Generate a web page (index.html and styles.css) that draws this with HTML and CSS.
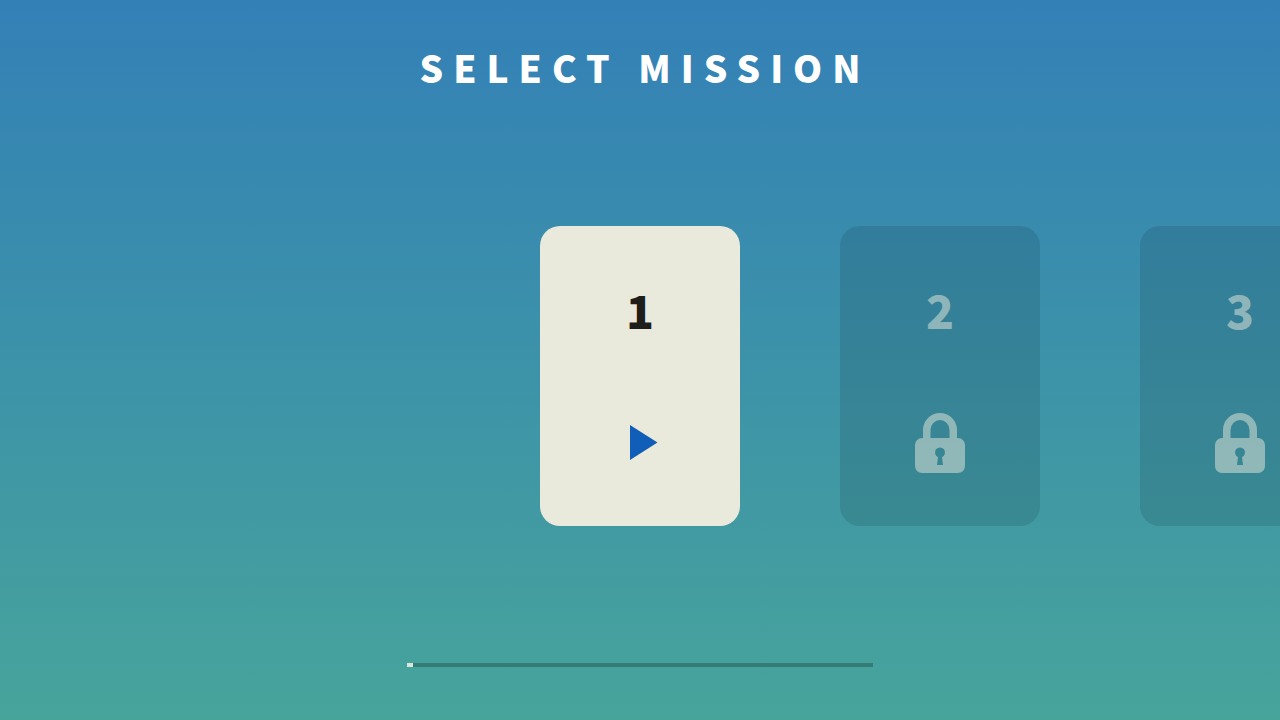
FILE: index.html
```html
<!DOCTYPE html>
<html lang="en">
<head>
    <meta charset="UTF-8">
    <meta name="viewport" content="width=device-width, initial-scale=1.0">
    <title>Select Mission</title>
    <link rel="stylesheet" href="styles.css">
</head>
<body>
    <header class="header">
        <h1 class="title">SELECT MISSION</h1>
    </header>

    <main class="missions">
        <button class="mission" type="button" aria-label="Play mission 1">
            <span class="number">1</span>
            <svg class="icon" viewBox="0 0 50 60" aria-hidden="true">
                <path class="play" d="M15 12 L42.5 29.5 L15 47 Z"/>
            </svg>
        </button>

        <button class="mission locked" type="button" disabled aria-label="Mission 2, locked">
            <span class="number">2</span>
            <svg class="icon" viewBox="0 0 50 60" aria-hidden="true">
                <path fill-rule="evenodd" d="M8 25 V17 A17 17 0 0 1 42 17 V25 H43 A7 7 0 0 1 50 32 V53 A7 7 0 0 1 43 60 H7 A7 7 0 0 1 0 53 V32 A7 7 0 0 1 7 25 Z M15.5 25 H34.5 V17 A9.5 10 0 0 0 15.5 17 Z M23 44 L22 52 H28 L27 44 A5 5 0 1 0 23 44 Z"/>
            </svg>
        </button>

        <button class="mission locked" type="button" disabled aria-label="Mission 3, locked">
            <span class="number">3</span>
            <svg class="icon" viewBox="0 0 50 60" aria-hidden="true">
                <path fill-rule="evenodd" d="M8 25 V17 A17 17 0 0 1 42 17 V25 H43 A7 7 0 0 1 50 32 V53 A7 7 0 0 1 43 60 H7 A7 7 0 0 1 0 53 V32 A7 7 0 0 1 7 25 Z M15.5 25 H34.5 V17 A9.5 10 0 0 0 15.5 17 Z M23 44 L22 52 H28 L27 44 A5 5 0 1 0 23 44 Z"/>
            </svg>
        </button>
    </main>

    <footer class="footer">
        <progress class="progress" value="1" max="80" aria-label="Mission progress"></progress>
    </footer>
</body>
</html>
```

FILE: styles.css
```css
* {
    margin: 0;
    padding: 0;
    box-sizing: border-box;
    font-family: "Noto Sans CJK SC", "Noto Sans", sans-serif;
}

body {
    background: linear-gradient(#3380b7 0%, #3a8eac 38%, #47a49b 100%);
    min-height: 100vh;
    display: flex;
    flex-direction: column;
    overflow: hidden;
}

.header {
    padding: 37px 20px 0;
    text-align: center;
}

.title {
    color: #fff;
    font-size: 37px;
    line-height: 60px;
    font-weight: 900;
    letter-spacing: 10px;
    /* evens out the spacing after the last letter */
    padding-left: 10px;
}

.missions {
    flex: 1;
    display: flex;
    align-items: center;
    gap: 100px;
    /* keeps the first card in the middle of the window */
    padding: 0 0 9px calc(50% - 100px);
    overflow: hidden;
}

.mission {
    flex: none;
    width: 200px;
    height: 300px;
    padding: 48px 0 53px;
    border: none;
    border-radius: 20px;
    background-color: #e9eadc;
    color: #1f1e1a;
    display: flex;
    flex-direction: column;
    align-items: center;
    justify-content: space-between;
    cursor: pointer;
}

.number {
    font-size: 46px;
    line-height: 70px;
    font-weight: 900;
}

.icon {
    width: 50px;
    height: 60px;
    fill: currentColor;
}

.play {
    fill: #115eb8;
}

.locked {
    background-color: rgba(20, 50, 60, 0.16);
    color: rgba(233, 234, 220, 0.5);
    cursor: default;
}

.footer {
    padding: 0 20px 53px;
    display: flex;
    justify-content: center;
}

.progress {
    appearance: none;
    width: 466px;
    max-width: 100%;
    height: 4px;
    border: none;
}

.progress::-webkit-progress-bar {
    background-color: #357b76;
}

.progress::-webkit-progress-value {
    background-color: #dce7d7;
}
```
